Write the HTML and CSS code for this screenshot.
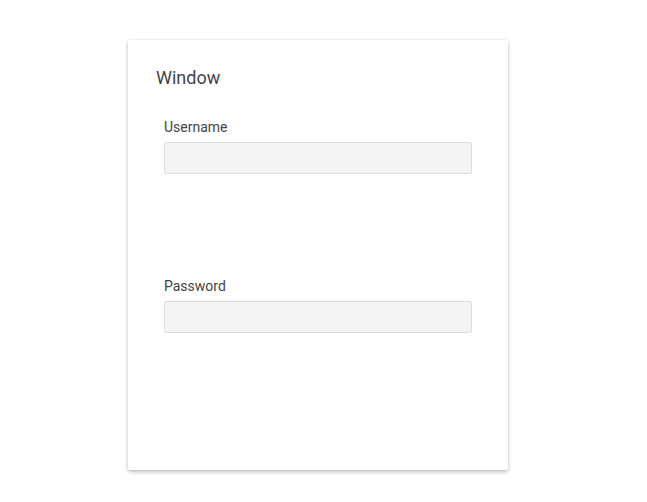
FILE: index.html
```html
<!DOCTYPE html>
<html>
<head>
<meta charset="utf-8">
<link rel="stylesheet" href="styles.css">
</head>
<body>
<div class="page">
  <div class="card">
    <h1 class="title">Window</h1>
    <div class="fields">
      <div class="field">
        <label class="label">Username</label>
        <input class="input" type="text">
      </div>
      <div class="field">
        <label class="label">Password</label>
        <input class="input" type="password">
      </div>
    </div>
  </div>
</div>
</body>
</html>
```
FILE: styles.css
```css
html, body {
  margin: 0;
  padding: 0;
  background: #fff;
  font-family: Roboto, "Liberation Sans", sans-serif;
}
.page {
  padding: 40px 0 30px 128px;
}
.card {
  width: 380px;
  height: 430px;
  box-sizing: border-box;
  background: #fff;
  box-shadow: 0 2px 4px rgba(0,0,0,0.25), 0 0 2px rgba(0,0,0,0.1);
  border-radius: 2px;
  padding: 26px 28px 0 28px;
}
.title {
  margin: 0;
  font-size: 18px;
  line-height: 24px;
  font-weight: 400;
  color: #444;
}
.fields {
  padding: 29px 8px 0 8px;
}
.field {
  display: flex;
  flex-direction: column;
  gap: 7px;
  margin-bottom: 104px;
}
.label {
  font-size: 14px;
  line-height: 16px;
  font-weight: 400;
  color: #444;
}
.input {
  box-sizing: border-box;
  width: 308px;
  height: 32px;
  margin: 0;
  background: #f4f4f4;
  border: 1px solid #dcdcdc;
  border-radius: 2px;
  outline: none;
}
```
